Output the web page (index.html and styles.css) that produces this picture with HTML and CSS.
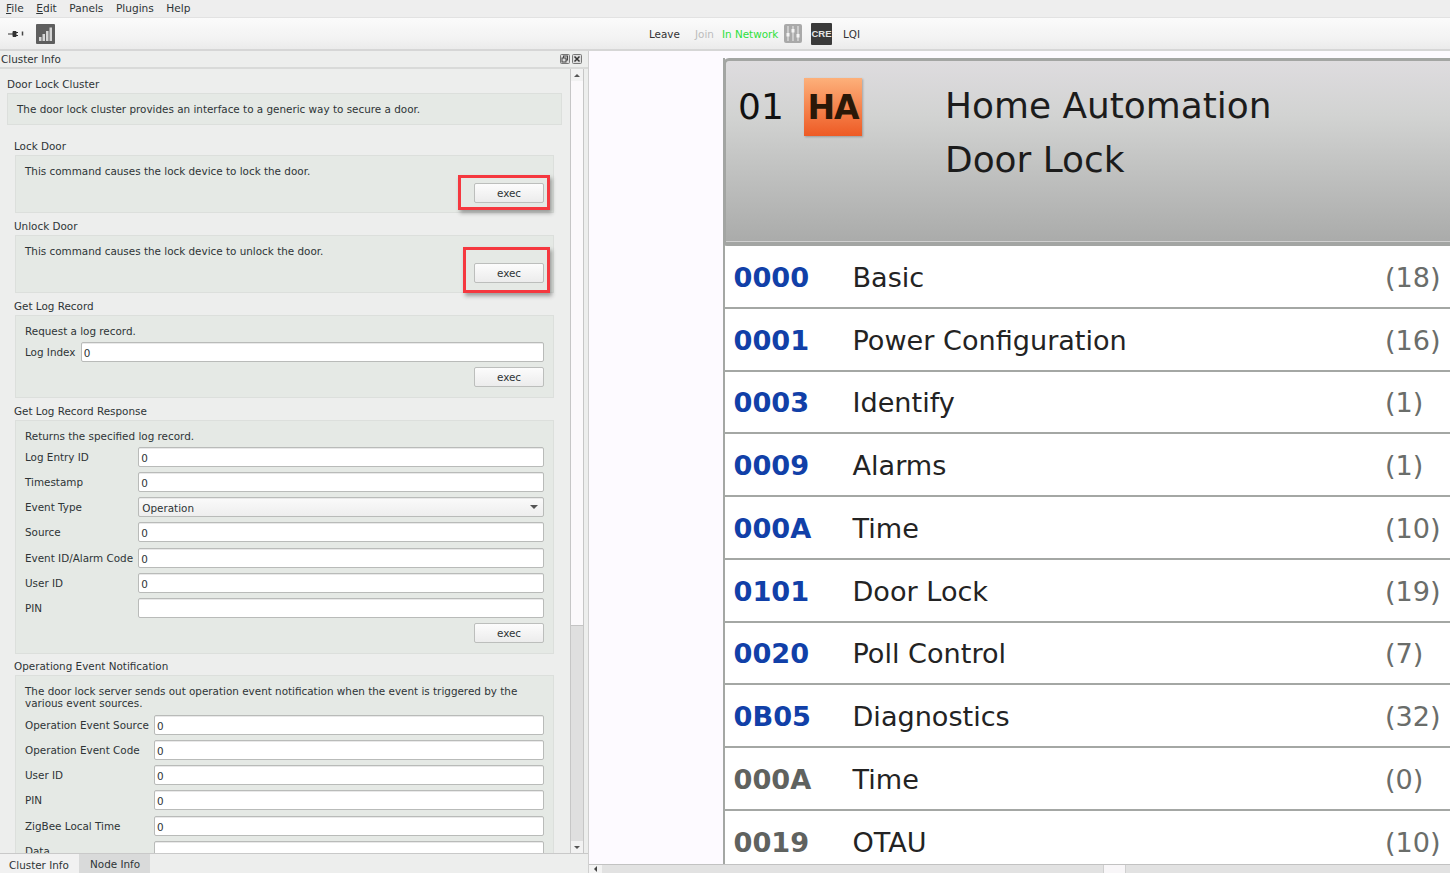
FILE: index.html
```html
<!DOCTYPE html>
<html lang="en">
<head>
<meta charset="utf-8">
<title>Cluster Info</title>
<link rel="stylesheet" href="styles.css">
</head>
<body>
<div class="app">
  <nav class="menubar">
    <span><u>F</u>ile</span><span><u>E</u>dit</span><span>Panels</span><span>Plugins</span><span>Help</span>
  </nav>
  <header class="toolbar">
    <div class="tool-left">
      <svg class="plug" width="18" height="8" viewBox="0 0 18 8"><path d="M1 4h5M6 1.500h3v5H6zM9 2.500h2M9 5.500h2" stroke="#333" fill="#333" stroke-width="1"/><path d="M15.500 1.500v4" stroke="#444" stroke-width="1.500"/></svg>
      <svg class="lqi-icon" width="19" height="20" viewBox="0 0 19 20"><rect width="19" height="20" rx="1" fill="#5e5e5e"/><path d="M3 13h2.500v4H3zM6.500 10H9v7H6.500zM10 7h2.500v10H10zM13.500 3.500H16V17h-2.500z" fill="#d4d4d4"/></svg>
    </div>
    <div class="tool-center">
      <span class="t-leave">Leave</span>
      <span class="t-join">Join</span>
      <span class="t-net">In Network</span>
      <svg class="mixer" width="18" height="19" viewBox="0 0 18 19"><rect width="18" height="19" rx="2" fill="#a9a9a9"/><path d="M4 2v15M9 2v15M14 2v15" stroke="#eee" stroke-width="1"/><path d="M2.500 9h3v3.500h-3zM7.500 5h3v3.500h-3zM12.500 10h3v3.500h-3z" fill="#f4f4f4"/></svg>
      <span class="cre">CRE</span>
      <span class="t-lqi">LQI</span>
    </div>
  </header>
  <main class="workspace">
    <section class="dock">
      <div class="dock-title">
        <span>Cluster Info</span>
        <span class="dock-btns">
          <svg width="10" height="10" viewBox="0 0 10 10"><rect x=".5" y=".5" width="9" height="9" rx="1" fill="#ddd" stroke="#777"/><rect x="3.500" y="2" width="4" height="4" fill="none" stroke="#444"/><rect x="2" y="4" width="4" height="4" fill="#ddd" stroke="#444"/></svg>
          <svg width="10" height="10" viewBox="0 0 10 10"><rect x=".5" y=".5" width="9" height="9" rx="1" fill="#ddd" stroke="#777"/><path d="M2.500 2.500l5 5M7.500 2.500l-5 5" stroke="#333" stroke-width="1.500"/></svg>
        </span>
      </div>
      <div class="scroller">
        <div class="content">
          <div class="cluster-title">Door Lock Cluster</div>
          <div class="cluster-box">The door lock cluster provides an interface to a generic way to secure a door.</div>

          <div class="group-label first">Lock Door</div>
          <div class="group g-simple">
            <p>This command causes the lock device to lock the door.</p>
            <div class="actions"><span class="mark mark-a"></span><button class="exec">exec</button></div>
          </div>

          <div class="group-label">Unlock Door</div>
          <div class="group g-simple">
            <p>This command causes the lock device to unlock the door.</p>
            <div class="actions"><span class="mark mark-b"></span><button class="exec">exec</button></div>
          </div>

          <div class="group-label">Get Log Record</div>
          <div class="group">
            <p>Request a log record.</p>
            <div class="form">
              <label>Log Index</label><div class="field">0</div>
            </div>
            <div class="actions"><button class="exec">exec</button></div>
          </div>

          <div class="group-label">Get Log Record Response</div>
          <div class="group">
            <p>Returns the specified log record.</p>
            <div class="form">
              <label>Log Entry ID</label><div class="field">0</div>
              <label>Timestamp</label><div class="field">0</div>
              <label>Event Type</label><div class="field combo">Operation<i class="caret"></i></div>
              <label>Source</label><div class="field">0</div>
              <label>Event ID/Alarm Code</label><div class="field">0</div>
              <label>User ID</label><div class="field">0</div>
              <label>PIN</label><div class="field"></div>
            </div>
            <div class="actions"><button class="exec">exec</button></div>
          </div>

          <div class="group-label tight">Operationg Event Notification</div>
          <div class="group">
            <p class="two">The door lock server sends out operation event notification when the event is triggered by the various event sources.</p>
            <div class="form">
              <label>Operation Event Source</label><div class="field">0</div>
              <label>Operation Event Code</label><div class="field">0</div>
              <label>User ID</label><div class="field">0</div>
              <label>PIN</label><div class="field">0</div>
              <label>ZigBee Local Time</label><div class="field">0</div>
              <label>Data</label><div class="field"></div>
            </div>
          </div>
        </div>
        <div class="vscroll">
          <div class="arrow"><i class="up"></i></div>
          <div class="v-thumb"></div>
          <div class="v-track"></div>
          <div class="arrow"><i class="down"></i></div>
        </div>
      </div>
      <div class="tabs">
        <span class="tab active">Cluster Info</span>
        <span class="tab">Node Info</span>
      </div>
    </section>
    <section class="canvas">
      <div class="canvas-view">
        <div class="node">
          <div class="node-head">
            <div class="ep">01</div>
            <div class="ha">HA</div>
            <div class="profile">Home Automation<br>Door Lock</div>
          </div>
          <div class="row"><b>0000</b><span class="name">Basic</span><span class="count">(18)</span></div>
          <div class="row"><b>0001</b><span class="name">Power Configuration</span><span class="count">(16)</span></div>
          <div class="row"><b>0003</b><span class="name">Identify</span><span class="count">(1)</span></div>
          <div class="row"><b>0009</b><span class="name">Alarms</span><span class="count">(1)</span></div>
          <div class="row"><b>000A</b><span class="name">Time</span><span class="count">(10)</span></div>
          <div class="row"><b>0101</b><span class="name">Door Lock</span><span class="count">(19)</span></div>
          <div class="row"><b>0020</b><span class="name">Poll Control</span><span class="count">(7)</span></div>
          <div class="row"><b>0B05</b><span class="name">Diagnostics</span><span class="count">(32)</span></div>
          <div class="row out"><b>000A</b><span class="name">Time</span><span class="count">(0)</span></div>
          <div class="row out"><b>0019</b><span class="name">OTAU</span><span class="count">(10)</span></div>
        </div>
      </div>
      <div class="hscroll">
        <div class="h-arrow"><i class="left"></i></div>
        <div class="h-track"></div>
        <div class="h-thumb"></div>
        <div class="h-rest"></div>
      </div>
    </section>
  </main>
</div>
</body>
</html>
```
FILE: styles.css
```css
* { box-sizing: border-box; }
html, body { margin: 0; height: 100%; overflow: hidden; }
body { font-family: "DejaVu Sans", sans-serif; font-size: 10.4px; color: #2e3436; background: #edeeed; }
.app { width: 1450px; height: 873px; display: flex; flex-direction: column; overflow: hidden; }

.menubar { height: 18px; display: flex; gap: 12.500px; padding: 1px 0 0 6px; font-size: 10.600px; line-height: 15px; background: #eeeeee; border-bottom: 1px solid #e2e2e2; }
.menubar u { text-decoration-thickness: 1px; }

.toolbar { height: 33px; display: flex; align-items: center; background: linear-gradient(#fbfbfb, #f2f2f2 70%, #ebebeb); border-bottom: 2px solid #d6d6d6; }
.tool-left { width: 649px; display: flex; align-items: center; padding-left: 7px; }
.plug { margin-right: 11px; }
.lqi-icon { display: block; }
.tool-center { display: flex; align-items: center; }
.t-leave { width: 46px; color: #333; }
.t-join { width: 27px; color: #bcbcbc; }
.t-net { width: 62px; color: #2ee03a; }
.mixer { margin-right: 9px; }
.cre { width: 21px; height: 22px; background: #3a3a3a; color: #e4e4e4; font: bold 9.500px/22px "Liberation Sans", sans-serif; text-align: center; border-radius: 1px; margin-right: 11px; }
.t-lqi { color: #333; }

.workspace { flex: 1; display: flex; min-height: 0; }
.dock { width: 588px; display: flex; flex-direction: column; background: #edeeed; }
.dock-title { height: 18px; flex: none; display: flex; justify-content: space-between; align-items: center; padding: 0 6px 0 1px; border-bottom: 2px solid #d9dad9; }
.dock-btns { display: flex; gap: 2px; }
.dock-btns svg { display: block; }

.scroller { flex: 1; min-height: 0; display: flex; overflow: hidden; padding-right: 4px; }
.content { flex: 1; min-width: 0; overflow: hidden; padding: 8px 8px 0 7px; }
.cluster-title { line-height: 14px; height: 16px; }
.cluster-box { height: 32px; padding-left: 9px; line-height: 31px; background: #e5e9e5; border: 1px solid #dcdfdc; }
.group-label { margin: 5px 0 0 7px; height: 17px; line-height: 15px; padding-top: 1px; }
.group-label.first { margin-top: 13px; }
.group-label.tight { margin-top: 4px; }
.group { margin: 0 8px; padding: 9px 9px 10px; background: #e5e9e5; border: 1px solid #dcdfdc; }
.group p { margin: 0; line-height: 12px; height: 13px; }
.group p.two { height: 26px; }
.g-simple { height: 58px; padding-bottom: 0; }
.form { display: grid; grid-template-columns: max-content 1fr; column-gap: 5.200px; row-gap: 5.170px; margin-top: 4px; align-items: center; }
.form label { white-space: nowrap; }
.field { height: 20px; background: #fff; border: 1px solid #b9bbb9; border-radius: 2px; padding-left: 2px; line-height: 20px; box-shadow: inset 0 1px 0 #e9e9e9; }
.combo { position: relative; padding-left: 3px; background: linear-gradient(#fafafa, #eeeeee); }
.caret { position: absolute; right: 5px; top: 7px; border: 4px solid transparent; border-bottom: 0; border-top-color: #555; }
.actions { display: flex; justify-content: flex-end; margin-top: 5px; position: relative; }
.exec { width: 70px; height: 20px; padding: 0; font: inherit; color: #2e3436; background: linear-gradient(#fcfcfc, #ececec); border: 1px solid #bcbebc; border-radius: 2px; }
.mark { position: absolute; border: 3px solid #f5383f; box-shadow: 2px 3px 4px rgba(60, 60, 60, .45); pointer-events: none; }
.mark-a { top: -8px; right: -6px; width: 92px; height: 35px; }
.mark-b { top: -16px; right: -6px; width: 87px; height: 46px; }

.vscroll { width: 14px; flex: none; display: flex; flex-direction: column; border: 1px solid #c6c6c6; border-width: 0 1px; }
.arrow { height: 12px; background: #f2f2f2; display: flex; align-items: center; justify-content: center; flex: none; }
.arrow i { border: 3.500px solid transparent; }
.arrow .up { border-top: 0; border-bottom-color: #555; }
.arrow .down { border-bottom: 0; border-top-color: #555; }
.v-thumb { height: 545px; flex: none; background: #fbf9fb; border-bottom: 1px solid #c4c4c4; }
.v-track { flex: 1; background: #dfdfdf; }

.tabs { height: 20px; flex: none; display: flex; border-top: 1px solid #c9c9c9; background: #edeeed; }
.tab { height: 19px; white-space: nowrap; }
.tab.active { width: 79px; padding-left: 9px; line-height: 22px; background: #f1f1f1; }
.tab:not(.active) { width: 71px; padding-left: 11px; line-height: 20px; background: #d9dada; }

.canvas { flex: 1; min-width: 0; display: flex; flex-direction: column; border-left: 1px solid #cfcfcf; background: #fdfaff; }
.canvas-view { flex: 1; min-height: 0; overflow: hidden; padding: 7px 0 0 134px; }
.node { width: 900px; border-left: 2px solid #a4a7a4; font-size: 27.100px; color: #232323; }
.node-head { height: 188px; margin-left: -2px; display: grid; grid-template-columns: 80px 142px 1fr; align-content: start; padding: 17px 0 0 12px; background: linear-gradient(#dedcdf, #d2d3d2 30%, #aaabaa); border: solid #a3a5a3; border-width: 3px 0 4px 3px; border-radius: 6px 0 0 4px; box-shadow: inset 0 -1px 0 #d0d0d0; }
.ep { font-size: 36px; line-height: 42px; color: #111; margin-top: 8px; }
.ha { width: 58px; height: 58px; margin-left: -14px; background: linear-gradient(#fdb07a, #ee5a24); color: #2a1808; font: bold 33px/60px "DejaVu Sans", sans-serif; text-align: center; box-shadow: 1px 1px 2px rgba(0,0,0,.25); letter-spacing: -1px; }
.profile { font-size: 35.900px; line-height: 53.500px; color: #1c1c1c; margin-top: 1px; margin-left: -15px; white-space: nowrap; }
.row { height: 62.750px; display: grid; grid-template-columns: 119px 532.500px 1fr; align-items: center; padding: 2px 0 0 8.500px; background: #fff; border-bottom: 2.500px solid #a4a7a4; }
.row b { color: #1140a8; font-size: 27.200px; }
.row.out b { color: #5f625f; }
.name { white-space: nowrap; }
.count { color: #6a6d6a; white-space: nowrap; }

.hscroll { height: 9px; flex: none; display: flex; background: #e4e4e4; border-top: 1px solid #c2c2c2; }
.h-arrow { width: 13px; display: flex; align-items: center; justify-content: center; background: #f3f3f3; }
.h-arrow i { border: 3.500px solid transparent; border-left: 0; border-right-color: #444; }
.h-track { width: 501px; background: #e2e2e2; }
.h-thumb { width: 23px; background: #f8f6f8; border: 1px solid #cfcfcf; border-width: 0 1px; }
.h-rest { flex: 1; background: #e2e2e2; }
```
